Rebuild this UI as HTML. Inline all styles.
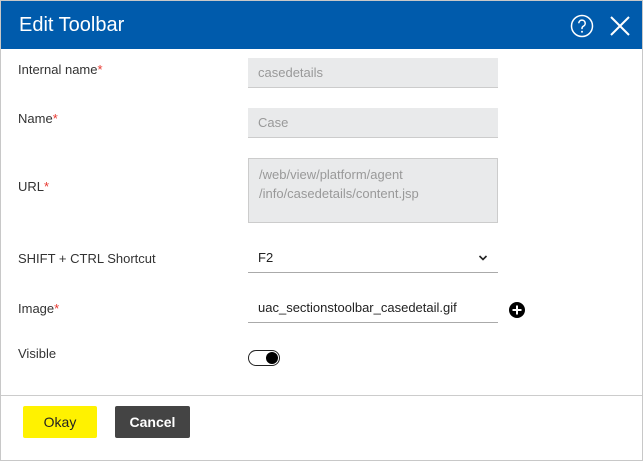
<!DOCTYPE html><html><head><style>
*{margin:0;padding:0;box-sizing:border-box}
body{width:643px;height:461px;background:#fff;font-family:"Liberation Sans",sans-serif;position:relative;overflow:hidden;color:#333}
.frame{position:absolute;left:0;top:0;width:643px;height:461px;border:1px solid #c8c8c8}
.hdr{position:absolute;left:1px;top:1px;width:641px;height:48px;background:#005bac;color:#fff;font-size:20px;line-height:48px;padding-left:18px}
.lbl{position:absolute;left:18px;font-size:13px;color:#333}
.lbl b{color:#e8372f;font-weight:normal}
.inp{position:absolute;left:248px;width:250px;background:#e9eaeb;border-bottom:1px solid #ccc;color:#999;font-size:13px;padding:0 10px}
.ul{position:absolute;left:248px;width:250px;border-bottom:1px solid #aaa;font-size:13px;color:#222;padding-left:10px}
.btn{position:absolute;top:406px;height:32px;font-size:14px;font-weight:bold;text-align:center;line-height:32px;border-radius:2px}
</style></head><body>
<div class="frame"></div>
<div class="hdr">Edit Toolbar
<svg style="position:absolute;left:569px;top:13px" width="24" height="24" viewBox="0 0 24 24"><circle cx="12" cy="12" r="10.5" fill="none" stroke="#fff" stroke-width="1.5"/><path d="M8.8 9.3a3.2 3.2 0 1 1 4.6 2.9c-1 .5-1.4 1.2-1.4 2.3v.6" fill="none" stroke="#fff" stroke-width="1.5"/><circle cx="12" cy="17.8" r="1" fill="#fff"/></svg>
<svg style="position:absolute;left:608px;top:14px" width="22" height="22" viewBox="0 0 22 22"><path d="M2 2L20 20M20 2L2 20" stroke="#fff" stroke-width="2"/></svg>
</div>
<div class="lbl" style="top:62px">Internal name<b>*</b></div>
<div class="inp" style="top:58px;height:30px;line-height:29px">casedetails</div>
<div class="lbl" style="top:111px">Name<b>*</b></div>
<div class="inp" style="top:108px;height:30px;line-height:29px">Case</div>
<div class="lbl" style="top:179px">URL<b>*</b></div>
<div class="inp" style="top:158px;height:65px;line-height:19px;padding-top:6px;border:1px solid #ccc">/web/view/platform/agent<br>/info/casedetails/content.jsp</div>
<div class="lbl" style="top:251px">SHIFT + CTRL Shortcut</div>
<div class="ul" style="top:243px;height:30px;line-height:30px">F2
<svg style="position:absolute;left:230px;top:11px" width="10" height="8" viewBox="0 0 10 8"><path d="M1.5 2L5 5.5 8.5 2" fill="none" stroke="#222" stroke-width="1.6"/></svg></div>
<div class="lbl" style="top:301px">Image<b>*</b></div>
<div class="ul" style="top:293px;height:30px;line-height:30px">uac_sectionstoolbar_casedetail.gif</div>
<svg style="position:absolute;left:508px;top:301px" width="18" height="18" viewBox="0 0 18 18"><circle cx="9" cy="9" r="8" fill="#000"/><path d="M9 4.5v9M4.5 9h9" stroke="#fff" stroke-width="2"/></svg>
<div class="lbl" style="top:346px">Visible</div>
<div style="position:absolute;left:248px;top:350px;width:32px;height:16px;border:1px solid #222;border-radius:8px"></div>
<div style="position:absolute;left:266px;top:352px;width:12px;height:12px;background:#000;border-radius:50%"></div>
<div style="position:absolute;left:1px;top:395px;width:641px;border-top:1px solid #ccc"></div>
<div class="btn" style="left:23px;width:74px;background:#fff200;color:#222;font-weight:normal">Okay</div>
<div class="btn" style="left:115px;width:75px;background:#444;color:#fff">Cancel</div>
</body></html>
